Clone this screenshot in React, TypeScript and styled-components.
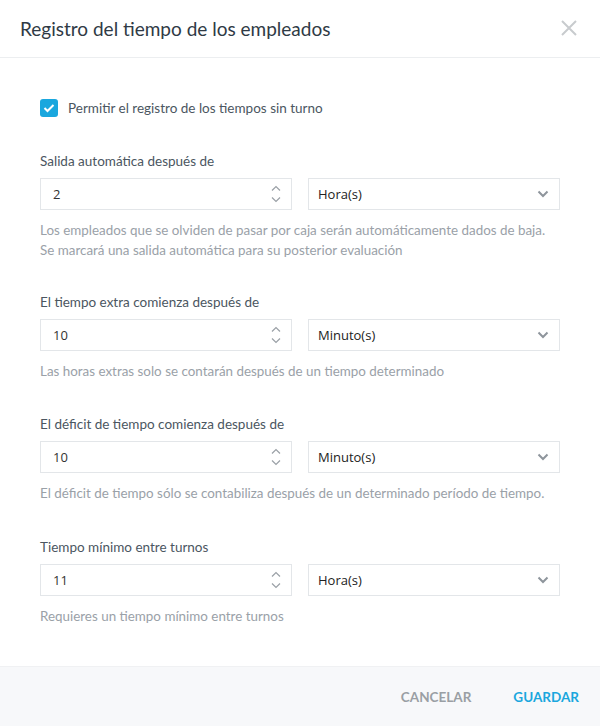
import React from "react";
import styled, { createGlobalStyle } from "styled-components";

const Global = createGlobalStyle`
  html, body { margin: 0; padding: 0; background: #fff; }
  body { font-family: Lato, "Noto Sans", sans-serif; }
  * { box-sizing: border-box; }
`;

const Modal = styled.div`
  width: 600px;
  height: 726px;
  display: flex;
  flex-direction: column;
  background: #fff;
`;

const Header = styled.div`
  height: 58px;
  flex: none;
  display: flex;
  align-items: center;
  justify-content: space-between;
  padding: 0 16px 0 20px;
  border-bottom: 1px solid #eceef0;
`;

const Title = styled.h1`
  margin: 0;
  font-family: Lato, sans-serif;
  font-weight: 400;
  font-size: 19px;
  color: #2f3a45;
  letter-spacing: 0;
`;

const Close = styled.button`
  border: 0;
  background: none;
  padding: 0;
  width: 30px;
  height: 30px;
  display: flex;
  align-items: center;
  justify-content: center;
  margin-top: -2px;
`;

const Body = styled.div`
  flex: 1;
  padding: 41px 40px 0;
  display: flex;
  flex-direction: column;
`;

const CheckRow = styled.label`
  display: flex;
  align-items: center;
  gap: 10px;
  font-size: 13.5px;
  color: #4b5661;
  margin-bottom: 34px;
`;

const Box = styled.span`
  width: 18px;
  height: 18px;
  border-radius: 3px;
  background: #1aa7de;
  display: flex;
  align-items: center;
  justify-content: center;
`;

const Section = styled.div<{ $gap: number }>`
  display: flex;
  flex-direction: column;
  margin-bottom: ${(p) => p.$gap}px;
`;

const Label = styled.div`
  font-size: 13.5px;
  color: #4b5661;
  line-height: 20px;
  margin-bottom: 7px;
`;

const Row = styled.div`
  display: grid;
  grid-template-columns: 252px 252px;
  column-gap: 16px;
`;

const NumberBox = styled.div`
  height: 32px;
  border: 1px solid #e3e6e9;
  display: flex;
  align-items: center;
  justify-content: space-between;
  padding: 0 10px 0 12px;
  font-family: "Open Sans", sans-serif;
  font-size: 13px;
  color: #333;
`;

const Spinner = styled.div`
  display: flex;
  flex-direction: column;
  gap: 6px;
`;

const SelectBox = styled.div`
  height: 32px;
  border: 1px solid #e3e6e9;
  display: flex;
  align-items: center;
  justify-content: space-between;
  padding: 0 10px 0 9px;
  font-family: "Open Sans", sans-serif;
  font-size: 13px;
  color: #222;
`;

const Help = styled.div`
  margin-top: 10px;
  font-size: 13.4px;
  line-height: 20px;
  color: #9aa1a8;
`;

const Footer = styled.div`
  height: 60px;
  flex: none;
  background: #f7f8fa;
  border-top: 1px solid #f0f1f3;
  display: flex;
  align-items: center;
  justify-content: flex-end;
  gap: 42px;
  padding-right: 21px;
`;

const Btn = styled.button<{ $primary?: boolean }>`
  border: 0;
  background: none;
  padding: 0;
  font-family: Lato, sans-serif;
  font-weight: 700;
  font-size: 13.5px;
  letter-spacing: 0;
  color: ${(p) => (p.$primary ? "#1aa7de" : "#9a9fa4")};
`;

const Up = () => (
  <svg width="10" height="6" viewBox="0 0 10 6">
    <path d="M1 5.5 L5 1.5 L9 5.5" fill="none" stroke="#9aa0a6" strokeWidth="1.2" />
  </svg>
);
const Down = () => (
  <svg width="10" height="6" viewBox="0 0 10 6">
    <path d="M1 0.5 L5 4.5 L9 0.5" fill="none" stroke="#9aa0a6" strokeWidth="1.2" />
  </svg>
);
const Chevron = () => (
  <svg width="12" height="8" viewBox="0 0 12 8">
    <path d="M1.5 1.5 L6 6 L10.5 1.5" fill="none" stroke="#8e959c" strokeWidth="2" />
  </svg>
);

type Field = { label: string; value: string; unit: string; help: string[]; gap: number };

const fields: Field[] = [
  {
    label: "Salida automática después de",
    value: "2",
    unit: "Hora(s)",
    help: [
      "Los empleados que se olviden de pasar por caja serán automáticamente dados de baja.",
      "Se marcará una salida automática para su posterior evaluación",
    ],
    gap: 32,
  },
  {
    label: "El tiempo extra comienza después de",
    value: "10",
    unit: "Minuto(s)",
    help: ["Las horas extras solo se contarán después de un tiempo determinado"],
    gap: 33,
  },
  {
    label: "El déficit de tiempo comienza después de",
    value: "10",
    unit: "Minuto(s)",
    help: ["El déficit de tiempo sólo se contabiliza después de un determinado período de tiempo."],
    gap: 34,
  },
  {
    label: "Tiempo mínimo entre turnos",
    value: "11",
    unit: "Hora(s)",
    help: ["Requieres un tiempo mínimo entre turnos"],
    gap: 0,
  },
];

export default function App() {
  return (
    <>
      <Global />
      <Modal>
        <Header>
          <Title>Registro del tiempo de los empleados</Title>
          <Close aria-label="Cerrar">
            <svg width="18" height="18" viewBox="0 0 18 18">
              <path d="M2 2 L16 16 M16 2 L2 16" stroke="#c8cbce" strokeWidth="2" />
            </svg>
          </Close>
        </Header>
        <Body>
          <CheckRow>
            <Box>
              <svg width="12" height="10" viewBox="0 0 12 10">
                <path d="M1.5 5 L4.5 8 L10.5 2" fill="none" stroke="#fff" strokeWidth="2" />
              </svg>
            </Box>
            Permitir el registro de los tiempos sin turno
          </CheckRow>
          {fields.map((f) => (
            <Section key={f.label} $gap={f.gap}>
              <Label>{f.label}</Label>
              <Row>
                <NumberBox>
                  <span>{f.value}</span>
                  <Spinner>
                    <Up />
                    <Down />
                  </Spinner>
                </NumberBox>
                <SelectBox>
                  <span>{f.unit}</span>
                  <Chevron />
                </SelectBox>
              </Row>
              <Help>
                {f.help.map((h) => (
                  <div key={h}>{h}</div>
                ))}
              </Help>
            </Section>
          ))}
        </Body>
        <Footer>
          <Btn>CANCELAR</Btn>
          <Btn $primary>GUARDAR</Btn>
        </Footer>
      </Modal>
    </>
  );
}
